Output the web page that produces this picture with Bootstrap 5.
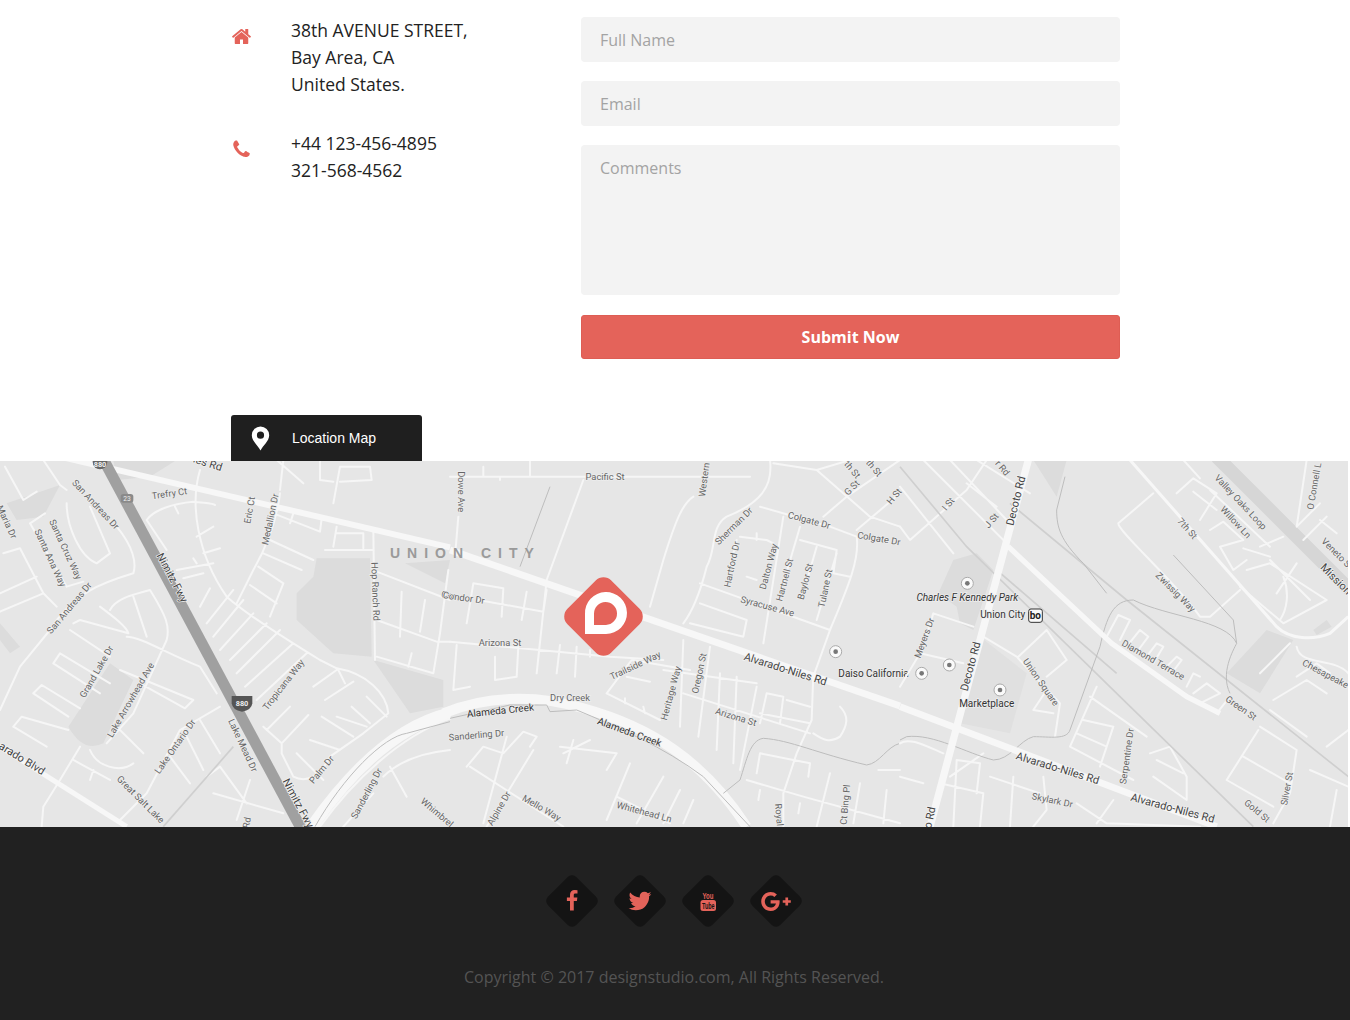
<!DOCTYPE html>
<html lang="en">
  <head>
    <meta charset="UTF-8" />
    <meta name="viewport" content="width=device-width, initial-scale=1.0" />
    <title>Contact</title>
    <link href="https://cdn.jsdelivr.net/npm/bootstrap@5.3.3/dist/css/bootstrap.min.css" rel="stylesheet" />
    <style>
      body { font-family: "Open Sans", sans-serif; color: #222; background: #fff; }
      .contact-wrap { width: 889px; margin-left: 231px; padding-top: 17px; }
      .info-col { width: 350px; flex: none; }
      .info-row { font-size: 17.5px; line-height: 27px; margin-top: 0; }
      .info-icon { width: 60px; flex: none; padding-top: 4px; }
      .info-phone { margin-top: 32px; }
      .info-text { margin-top: 0; margin-bottom: 0; }
      .contact-field.form-control { height: 45px; background: #f3f3f3; border: 0; border-radius: 4px; padding: 0 19px; font-size: 16px; margin-bottom: 19px; color: #333; box-shadow: none; }
      .contact-field::placeholder { color: #a3a3a3; opacity: 1; }
      textarea.contact-field.form-control { height: 150px; padding-top: 12px; resize: none; line-height: 22px; }
      .submit-btn.btn { width: 100%; height: 44px; margin-top: 1px; background: #e4635a; border: 1px solid #de5d54; border-radius: 3px; color: #fff; font-weight: 700; font-size: 16px; padding: 0; }
      .map-tab { width: 191px; height: 46px; margin: 56px 0 0 231px; background: #1f1f1f; color: #fff; border-radius: 3px 3px 0 0; font-family: "Liberation Sans", sans-serif; font-size: 14px; padding-left: 20px; }
      .map-tab-label { margin-left: 22px; }
      .map-box { width: 1348px; height: 366px; background: #e6e6e6; overflow: hidden; }
      .map-box svg { display: block; }
      .map-pin { position: absolute; left: 561px; top: 113px; }
      .st { fill: none; stroke: #f6f6f6; stroke-width: 6; stroke-linejoin: round; stroke-linecap: round; }
      .big { fill: none; stroke: #f7f7f7; stroke-linejoin: round; }
      .thin { fill: none; stroke: #bdbdbd; stroke-width: 3; stroke-linejoin: round; }
      .rail { fill: none; stroke: #cfcfcf; stroke-width: 5; }
      .park { fill: #dcdcdc; }
      .lbl { font-family: Roboto, sans-serif; font-size: 28px; fill: #666; text-anchor: middle; paint-order: stroke; stroke: #eee; stroke-width: 4px; }
      .lbl-big { font-family: Roboto, sans-serif; font-size: 33px; fill: #444; text-anchor: middle; paint-order: stroke; stroke: #f4f4f4; stroke-width: 4px; }
      .lbl-poi { font-family: Roboto, sans-serif; font-size: 30px; fill: #333; text-anchor: middle; paint-order: stroke; stroke: #eee; stroke-width: 4px; }
      .lbl-city { font-family: "Liberation Sans", sans-serif; font-size: 42px; fill: #9a9a9a; letter-spacing: 21px; font-weight: 700; }
      .site-foot { height: 193px; background: #212121; padding-top: 46px; }
      .soc-list { width: 1348px; gap: 12px; }
      .soc-item { width: 56px; height: 56px; position: relative; }
      .soc-item::before { content: ""; position: absolute; left: 8px; top: 8px; width: 40px; height: 40px; background: #141414; border-radius: 6px; transform: rotate(45deg); }
      .soc-item svg { position: relative; }
      .foot-copy { width: 1348px; margin: 37px 0 0; font-size: 16px; line-height: 22px; color: #545454; text-align: center; }
    </style>
  </head>

  <body>
    <section class="contact-wrap d-flex">
      <div class="info-col">
        <div class="d-flex info-row">
          <div class="info-icon">
            <svg width="21" height="21" viewBox="0 0 1792 1792" fill="#e4635a"><path d="M1472 992v480q0 26-19 45t-45 19h-384v-384h-256v384h-384q-26 0-45-19t-19-45v-480q0-1 .5-3t.5-3l575-474 575 474q1 2 1 6zm223-69l-62 74q-8 9-21 11h-3q-13 0-21-7l-692-577-692 577q-12 8-24 7-13-2-21-11l-62-74q-8-10-7-23.5t11-21.5l719-599q32-26 76-26t76 26l244 204v-195q0-14 9-23t23-9h192q14 0 23 9t9 23v408l219 182q10 8 11 21.5t-7 23.5z"/></svg>
          </div>
          <p class="info-text">38th AVENUE STREET,<br />Bay Area, CA<br />United States.</p>
        </div>
        <div class="d-flex info-row info-phone">
          <div class="info-icon">
            <svg width="21" height="21" viewBox="0 0 1792 1792" fill="#e4635a"><path d="M1600 1240q0 27-10 70.5t-21 68.5q-21 50-122 106-94 51-186 51-27 0-53-3.5t-57.5-12.5-47-14.5-55.5-20.5-49-18q-98-35-175-83-127-79-264-216t-216-264q-48-77-83-175-3-9-18-49t-20.5-55.5-14.5-47-12.5-57.5-3.5-53q0-92 51-186 56-101 106-122 25-11 68.5-21t70.5-10q14 0 21 3 18 6 53 76 11 19 30 54t35 63.5 31 53.5q3 4 17.5 25t21.5 35.5 7 28.5q0 20-28.5 50t-62 55-62 53-28.5 46q0 9 5 22.5t8.5 20.5 14 24 11.5 19q76 137 174 235t235 174q2 1 19 11.5t24 14 20.5 8.5 22.5 5q18 0 46-28.5t53-62 55-62 50-28.5q14 0 28.5 7t35.5 21.5 25 17.5q25 15 53.5 31t63.5 35 54 30q70 35 76 53 3 7 3 21z"/></svg>
          </div>
          <p class="info-text">+44 123-456-4895<br />321-568-4562</p>
        </div>
      </div>
      <form class="flex-grow-1">
        <input class="form-control contact-field" type="text" placeholder="Full Name" />
        <input class="form-control contact-field" type="text" placeholder="Email" />
        <textarea class="form-control contact-field" placeholder="Comments"></textarea>
        <button class="btn submit-btn" type="button">Submit Now</button>
      </form>
    </section>

    <div class="map-tab d-flex align-items-center">
      <svg width="19" height="25" viewBox="0 0 19 25"><path fill="#fff" fill-rule="evenodd" d="M9.5 24.5C7 19.5.8 15 .8 9.2a8.7 8.7 0 0 1 17.4 0c0 5.800-6.200 10.300-8.700 15.300zM9.500 5.600a3.600 3.600 0 1 0 0 7.200 3.600 3.600 0 0 0 0-7.200z"/></svg>
      <span class="map-tab-label">Location Map</span>
    </div>

    <div class="map-box position-relative">
      <svg width="1348" height="366" viewBox="0 461 1348 366">
        <!-- west part, coords read off the 3x crop -->
        <g transform="translate(0,460) scale(.33333)">
          <path class="park" d="M20 130L180 75 130 170 50 180zM330 610L400 660 310 850Q250 880 205 800zM950 295L1110 295 1115 590 1000 580 890 480 890 400 940 350zM1120 600L1330 660 1330 740 1230 760zM1215 310L1350 300 1335 370zM0 490L60 560 30 580 0 540zM340 0L530 0 450 50 350 60z"/>
          <path class="big" stroke-width="36" stroke="#efefef" d="M935 1100C1040 950 1180 800 1350 760"/>
          <path class="st" d="M15 20L70 120 110 95M130 0L180 75 200 90M90 190L135 160M200 130C200 200 240 290 290 310L330 280 270 140M350 200C400 260 410 310 400 340 300 370 220 400 150 510L60 620 0 750M90 190L200 380 250 365M0 400L110 350M0 455L130 400M10 280L60 265 130 400 170 440M300 440C340 470 380 500 385 520M330 450C350 410 420 400 450 390 500 470 510 500 500 540L400 760 320 850M400 410L440 530M220 490L240 480 385 520M210 510L330 590M380 530C420 530 500 580 600 620L650 700M160 610L180 580 330 670M160 610L300 700M100 700L125 675 240 745M100 700L205 770M40 800L65 770 205 810M40 800L140 860M360 630L580 720 555 745 420 670M350 800L430 880M660 740L540 810 440 1000 360 1080M600 780L660 880M550 810L610 930M510 890L570 970M620 950L660 920 740 1030M750 960L710 1080M270 870C290 920 360 940 400 910M240 860L180 960 130 1040 125 1100M220 900L330 960M280 930L270 960M640 1000L850 1060"/>
          <path class="st" d="M600 30C570 130 590 280 680 410 760 480 880 550 960 600L1010 625C1100 640 1160 700 1165 760L1090 820 990 890C960 950 920 970 880 950L845 880 845 850 790 800M530 330L640 310M550 355L610 340M600 440L630 385M620 490L700 390M640 530L730 420M660 570L760 460M690 600L800 490M710 640L840 510M735 680L880 550M770 720L920 580M800 810L870 740M845 850L925 765M890 880L970 960M930 840L1020 870M965 770L1060 830M1010 770L1100 800M1055 740L1110 790M1100 710L1160 770M940 680L1010 630M975 720L1060 665M1015 630L1035 670M440 180C460 150 520 130 580 125 620 130 640 130 645 135M440 180L480 240 500 270M525 140L535 160M590 230L640 200M610 280L660 265M580 295L590 310M840 100C830 180 800 260 760 330L710 430M775 320L850 370 810 470M750 375L830 430M830 0L910 70M850 0L840 90M820 160L960 215 965 175M880 160L870 190M810 240L940 300M790 280L905 330M1000 130L1020 20 1110 20 1115 60 1020 65M960 0L960 60 1000 65M1010 200L1000 260M1010 220L1090 220 1090 265M975 270L1120 270M1120 210L1125 600M1130 335L1350 420M1130 480L1310 545 1350 545M1205 395L1200 530M1275 420L1260 515M1130 590L1300 640 1320 520 1345 330M1235 580L1225 620M1350 870C1250 880 1190 910 1150 950M1170 920L1220 1010M1120 1000L1030 1100M960 1100C1060 960 1200 830 1350 775"/>
          <path class="rail" stroke="#d2d2d2" stroke-width="15" d="M490 1100L700 860"/>
          <path class="thin" d="M945 1100C1030 950 1150 830 1220 820L1350 785"/>
          <path class="big" stroke-width="18" d="M180 -10L1350 262"/>
          <path class="big" stroke-width="15" d="M0 860L380 1100"/>
          <path fill="none" stroke="#a0a0a0" stroke-width="33" d="M309 -4L906 1110"/>
          <circle cx="300" cy="6" r="22" fill="#666"/><text x="300" y="20" font-family="Roboto" font-size="22" text-anchor="middle" font-weight="700" fill="#eee">880</text>
          <path fill="#555" d="M695 708H757V730Q755 750 726 755 697 750 695 730z"/><text x="726" y="739" font-family="Roboto" font-size="22" text-anchor="middle" font-weight="700" fill="#eee">880</text>
          <rect x="362" y="102" width="38" height="26" rx="8" fill="#8a8a8a"/><text x="381" y="122" font-family="Roboto" font-size="20" text-anchor="middle" fill="#eee">23</text>
          <text class="lbl-big" transform="translate(620,20) rotate(18)">les Rd</text>
          <text class="lbl" transform="translate(280,140) rotate(47)">San Andreas Dr</text>
          <text class="lbl" transform="translate(510,110) rotate(-8)">Trefry Ct</text>
          <text class="lbl" transform="translate(758,152) rotate(-80)">Eric Ct</text>
          <text class="lbl" transform="translate(820,180) rotate(-78)">Medallion Dr</text>
          <text class="lbl" transform="translate(1117,395) rotate(88)">Hop Ranch Rd</text>
          <text class="lbl" transform="translate(188,272) rotate(65)">Santa Cruz Way</text>
          <text class="lbl" transform="translate(142,298) rotate(65)">Santa Ana Way</text>
          <text class="lbl" transform="translate(215,450) rotate(-50)">San Andreas Dr</text>
          <text class="lbl" transform="translate(12,190) rotate(65)">Maria Dr</text>
          <text class="lbl-big" transform="translate(507,358) rotate(62)">Nimitz Fwy</text>
          <text class="lbl" transform="translate(298,640) rotate(-60)">Grand Lake Dr</text>
          <text class="lbl" transform="translate(400,725) rotate(-60)">Lake Arrowhead Ave</text>
          <text class="lbl" transform="translate(858,680) rotate(-52)">Tropicana Way</text>
          <text class="lbl" transform="translate(533,865) rotate(-55)">Lake Ontario Dr</text>
          <text class="lbl" transform="translate(720,860) rotate(65)">Lake Mead Dr</text>
          <text class="lbl" transform="translate(972,935) rotate(-50)">Palm Dr</text>
          <text class="lbl" transform="translate(1108,1005) rotate(-62)">Sanderling Dr</text>
          <text class="lbl" transform="translate(1305,1065) rotate(40)">Whimbrel</text>
          <text class="lbl-big" transform="translate(885,1035) rotate(62)">Nimitz Fwy</text>
          <text class="lbl-big" transform="translate(60,905) rotate(32)">arado Blvd</text>
          <text class="lbl" transform="translate(415,1025) rotate(45)">Great Salt Lake</text>
          <text class="lbl" transform="translate(750,1090) rotate(-80)">Rd</text>
          <text class="lbl" transform="translate(1345,415) rotate(8)">Cor</text>
        </g>
        <!-- middle -->
        <g transform="translate(450,460) scale(.33333)">
          <path class="st" d="M0 50L900 50M100 20L100 50M240 0L240 50M150 50L150 60M25 170L15 290M400 60L290 360 260 640M50 490L70 370 160 385 155 470M85 420L280 455 290 390M230 395L215 480M0 545L480 590 640 600M20 555L10 690 60 680M135 590L135 660 200 650 205 560M270 545L260 640M330 555L320 640M380 560L375 650M420 570L420 590M470 700L545 600 720 630M470 700L630 780M530 650L600 665M525 715L525 730M580 740L585 760M640 630L920 670M700 700L1080 820M700 540L690 800M780 560L745 830M810 640L800 870M860 650L850 910M920 680L870 930M950 700L1000 710 990 790M950 700L930 790M1010 720L1080 740M930 760L1080 790M1090 640L1085 780 1040 880 1000 1000M730 110C700 130 680 170 640 300L600 440M960 0C970 80 930 130 830 170 780 200 800 270 770 320 750 400 730 450 700 490M930 140L1140 200 1220 230C1230 300 1190 390 1140 510L1090 650M870 230L950 240 970 250M860 240L840 320M1050 200L1000 370M750 370L1140 510M750 430L890 480 880 530 720 490M890 350L920 360M920 220L920 240M1000 170L940 550M1050 240L1160 270 1150 340 1200 350M1100 260L1060 400M1160 280L1100 480M970 10L1100 30 1260 170 1350 200M1100 30L1200 0M1120 170L1190 110 1350 0M1220 210L1350 100M50 920L100 860 160 880 220 815 260 830 240 860M60 920L340 1100M170 830L100 1090M250 870L110 1100M330 860L500 880 470 930M340 880L420 840M540 910L470 1080M640 950L560 1090M690 990L640 1090M730 1020L700 1090M500 1010L660 1090M370 840L350 910M890 960L1060 1010 1350 1090M930 880L920 940M930 880L1080 910 1075 950M1140 940L1100 1100M1230 970L1210 1090M1310 990L1300 1090M1350 930L1285 930M1000 1000L1000 1100M930 990L925 1020M1050 1030L1045 1060M1170 740C1200 770 1190 800 1170 830 1140 850 1120 840 1090 820"/>
          <path class="big" stroke-width="30" stroke="#efefef" d="M-20 760C100 710 250 700 400 745 600 800 760 900 890 1100"/>
          <path class="thin" d="M0 775L180 735 290 735 300 755 380 750C500 800 640 860 760 950L900 1100M820 1000L870 960C890 900 900 840 940 835 1020 840 1100 880 1250 915 1290 910 1310 860 1350 850M300 80L210 320"/>
          <path class="big" stroke-width="20" d="M0 270L1350 738"/>
          <text class="lbl" transform="translate(25,95) rotate(90)">Dowe Ave</text>
          <text class="lbl" transform="translate(465,60)">Pacific St</text>
          <text class="lbl" transform="translate(772,60) rotate(-82)">Western</text>
          <text class="lbl" transform="translate(858,205) rotate(-45)">Sherman Dr</text>
          <text class="lbl" transform="translate(1075,190) rotate(15)">Colgate Dr</text>
          <text class="lbl" transform="translate(1285,245) rotate(10)">Colgate Dr</text>
          <text class="lbl" transform="translate(1212,90) rotate(-45)">G St</text>
          <text class="lbl" transform="translate(1200,35) rotate(50)">th St</text>
          <text class="lbl" transform="translate(1265,30) rotate(50)">th St</text>
          <text class="lbl" transform="translate(1340,115) rotate(-50)">H St</text>
          <text class="lbl" transform="translate(855,315) rotate(-78)">Hartford Dr</text>
          <text class="lbl" transform="translate(965,322) rotate(-75)">Dalton Way</text>
          <text class="lbl" transform="translate(1013,362) rotate(-75)">Hartnell St</text>
          <text class="lbl" transform="translate(1075,367) rotate(-75)">Baylor St</text>
          <text class="lbl" transform="translate(1135,387) rotate(-78)">Tulane St</text>
          <text class="lbl" transform="translate(950,448) rotate(15)">Syracuse Ave</text>
          <text class="lbl" transform="translate(150,558)">Arizona St</text>
          <text class="lbl" transform="translate(40,423) rotate(8)">Condor Dr</text>
          <text class="lbl" transform="translate(560,625) rotate(-25)">Trailside Way</text>
          <text class="lbl" transform="translate(672,702) rotate(-75)">Heritage Way</text>
          <text class="lbl" transform="translate(757,642) rotate(-78)">Oregon St</text>
          <text class="lbl-big" transform="translate(1003,638) rotate(17.500)">Alvarado-Niles Rd</text>
          <text class="lbl" transform="translate(360,724)">Dry Creek</text>
          <text class="lbl-poi" transform="translate(152,762) rotate(-6)">Alameda Creek</text>
          <text class="lbl-poi" transform="translate(535,826) rotate(20)">Alameda Creek</text>
          <text class="lbl" transform="translate(80,835) rotate(-5)">Sanderling Dr</text>
          <text class="lbl" transform="translate(855,780) rotate(17)">Arizona St</text>
          <text class="lbl" transform="translate(155,1050) rotate(-60)">Alpine Dr</text>
          <text class="lbl" transform="translate(270,1052) rotate(30)">Mello Way</text>
          <text class="lbl" transform="translate(580,1065) rotate(15)">Whitehead Ln</text>
          <text class="lbl" transform="translate(978,1065) rotate(85)">Royal</text>
          <text class="lbl" transform="translate(1195,1035) rotate(-85)">Ct Bing Pl</text>
          <circle cx="1157" cy="575" r="18" fill="#fafafa" stroke="#aaa" stroke-width="3"/><circle cx="1157" cy="575" r="7" fill="#777"/>
          <text class="lbl-poi" x="1165" y="651" style="text-anchor:start">Daiso California</text>
        </g>
        <!-- east -->
        <g transform="translate(900,460) scale(.33333)">
          <path class="park" d="M160 300L230 280 280 330 220 510 180 490 170 440 115 400zM400 0L500 0 470 110zM980 640L1100 510 1180 540 1080 700zM1240 510L1280 480 1295 500 1250 525z"/>
          <path fill="#e0e0e0" d="M240 530L380 640 330 820 180 790z"/>
          <path fill="none" stroke="#d6d6d6" stroke-width="40" d="M950 -10L1350 390"/>
          <path class="st" d="M0 80L160 280M70 0L330 260M150 0L320 180M0 200L30 240 200 90 260 0M200 70L290 140M230 0L390 100M60 590L100 460 220 500M0 680L60 580 190 610M250 530L350 590 480 730 465 830M355 590L440 510 500 600 440 650M400 750L440 690M400 750L460 760M760 100L655 190C650 210 830 370 900 470L930 470 1020 390M850 0L900 55M830 100L880 55 950 100 900 180M880 95L950 150M930 90L1110 260M930 210L970 185 1030 240 960 260 1000 330 1040 300M1030 265L1110 290M1040 330L1110 310 1280 420 1150 490 1020 380M1080 260L1150 230M1110 300L1230 420M1150 350C1170 400 1160 450 1140 480M1190 310L1130 400M1190 200L1260 130M1210 240L1280 170M1260 180L1310 220M1080 640L1170 550M620 530L655 465 690 480 660 540M680 560L720 510 745 530 715 570M740 590L770 550 790 560 760 610M800 620L830 590 845 600 815 640M860 680L880 640 900 650M880 700L920 670 960 700 900 730M950 760L990 710M1190 560C1200 620 1300 590 1345 640M1190 650L1250 610 1290 640M1120 720L1220 660 1280 700M1110 750L1220 830M1280 860L1345 810M1080 800L1190 870 1170 1000 1120 1090M980 960L1075 810M980 960L1120 1040M1030 890L1170 970M1230 930L1345 980M1290 1100L1310 990M0 850C30 830 80 860 130 880M150 950L250 880M160 1100L170 900 240 910 230 1000M0 950L70 970M120 970L250 1000 240 1100M270 950L420 1000M340 950L330 1100M430 950L440 1050 400 1100M530 1030L620 1090 900 1100M590 680L510 860 700 960M570 710L740 830M550 780L640 800 600 920M530 820L620 860M750 880L810 860 860 950 860 1020 760 950M770 900L850 940M640 1020L590 1090M1220 0L1190 200"/>
          <path class="rail" d="M0 20L200 260 660 710 1060 1100M290 330L650 640M330 130L680 420 1345 950"/>
          <path class="thin" d="M820 285L1000 480 1010 550M470 150C470 200 480 240 550 310L620 400M495 50L470 150M600 560C620 470 640 420 700 420 800 470 980 480 1010 550 1000 570 960 640 990 700M600 560L510 810C500 840 450 830 400 830 360 840 330 900 280 900 200 880 100 820 20 830L0 840"/>
          <path class="big" stroke-width="9" d="M690 0L1130 500C1170 540 1240 540 1290 520L1345 470"/>
          <path class="big" stroke-width="16" d="M325 260L635 550 860 710 960 760"/>
          <path class="big" stroke-width="20" d="M0 740L950 1100"/>
          <path class="big" stroke-width="22" d="M385 0L90 1100"/>
          <text class="lbl-big" transform="translate(358,125) rotate(-76)">Decoto Rd</text>
          <text class="lbl-big" transform="translate(222,622) rotate(-75)">Decoto Rd</text>
          <text class="lbl" transform="translate(152,138) rotate(-50)">I St</text>
          <text class="lbl" transform="translate(282,188) rotate(-50)">J St</text>
          <text class="lbl" transform="translate(300,30) rotate(50)">r Rd</text>
          <text class="lbl-poi" transform="translate(202,423)" font-style="italic">Charles F Kennedy Park</text>
          <text class="lbl-poi" transform="translate(308,475)">Union City</text>
          <text class="lbl" transform="translate(82,537) rotate(-70)">Meyers Dr</text>
          <text class="lbl-poi" transform="translate(260,741)">Marketplace</text>
          <text class="lbl" transform="translate(415,672) rotate(55)">Union Square</text>
          <text class="lbl-big" transform="translate(470,935) rotate(17)">Alvarado-Niles Rd</text>
          <text class="lbl-big" transform="translate(815,1055) rotate(15)">Alvarado-Niles Rd</text>
          <text class="lbl" transform="translate(455,1030) rotate(12)">Skylark Dr</text>
          <text class="lbl" transform="translate(690,890) rotate(-82)">Serpentine Dr</text>
          <text class="lbl" transform="translate(755,608) rotate(30)">Diamond Terrace</text>
          <text class="lbl" transform="translate(1018,752) rotate(35)">Green St</text>
          <text class="lbl" transform="translate(1065,1060) rotate(40)">Gold St</text>
          <text class="lbl" transform="translate(1170,988) rotate(-80)">Silver St</text>
          <text class="lbl" transform="translate(1272,650) rotate(28)">Chesapeake</text>
          <text class="lbl" transform="translate(820,403) rotate(45)">Zwissig Way</text>
          <text class="lbl" transform="translate(855,212) rotate(48)">7th St</text>
          <text class="lbl" transform="translate(1015,133) rotate(47)">Valley Oaks Loop</text>
          <text class="lbl" transform="translate(1000,193) rotate(47)">Willow Ln</text>
          <text class="lbl" transform="translate(1252,80) rotate(-80)">O Connell L</text>
          <text class="lbl" transform="translate(1305,288) rotate(45)">Veneto St</text>
          <text class="lbl-big" transform="translate(1300,365) rotate(45)">Mission</text>
          <text class="lbl-big" transform="translate(100,1075) rotate(-78)">o Rd</text>
          <circle cx="202" cy="370" r="18" fill="#fafafa" stroke="#aaa" stroke-width="3"/><circle cx="202" cy="370" r="7" fill="#777"/>
          <circle cx="148" cy="615" r="18" fill="#fafafa" stroke="#aaa" stroke-width="3"/><circle cx="148" cy="615" r="7" fill="#777"/>
          <circle cx="65" cy="640" r="18" fill="#fafafa" stroke="#aaa" stroke-width="3"/><circle cx="65" cy="640" r="7" fill="#777"/>
          <circle cx="300" cy="690" r="18" fill="#fafafa" stroke="#aaa" stroke-width="3"/><circle cx="300" cy="690" r="7" fill="#777"/>
          <rect x="386" y="447" width="41" height="40" rx="7" fill="#fafafa" stroke="#333" stroke-width="3"/>
          <text x="406" y="478" font-family="Roboto" font-size="30" font-weight="700" text-anchor="middle" fill="#222">bo</text>
        </g>
        <text class="lbl-city" transform="translate(390,558) scale(.33333)">UNION CITY</text>
      </svg>
      <svg class="map-pin" width="85" height="85" viewBox="0 0 85 85">
        <rect x="11.500" y="11.500" width="62" height="62" rx="11" fill="#e4635a" transform="rotate(45 42.500 42.500)"/>
        <path fill="#fff" fill-rule="evenodd" d="M24 60V40a21 21 0 1 1 21 20zM33 51H45a11.500 11.500 0 1 0-12-11.500z"/>
      </svg>
    </div>

    <footer class="site-foot">
      <div class="soc-list d-flex justify-content-center">
        <a class="soc-item d-flex align-items-center justify-content-center" href="#">
          <svg width="22" height="22" viewBox="0 0 1792 1792" fill="#e4635a"><path d="M1343 12v264h-157q-86 0-116 36t-30 108v189h293l-39 296h-254v759h-306v-759h-255v-296h255v-218q0-186 104-288.5t277-102.5q147 0 228 12z"/></svg>
        </a>
        <a class="soc-item d-flex align-items-center justify-content-center" href="#">
          <svg width="26" height="26" viewBox="0 0 1792 1792" fill="#e4635a"><path d="M1684 408q-67 98-162 167 1 14 1 42 0 130-38 259.5t-115.5 248.5-184.5 210.5-258 146-323 54.5q-271 0-496-145 35 4 78 4 225 0 401-138-105-2-188-64.5t-114-159.5q33 5 61 5 43 0 85-11-112-23-185.5-111.5t-73.500-205.500v-4q68 38 146 41-66-44-105-115t-39-154q0-88 44-163 121 149 294.500 238.500t371.500 99.500q-8-38-8-74 0-134 94.500-228.500t228.500-94.500q140 0 236 102 109-21 205-78-37 115-142 181 97-11 192-52z"/></svg>
        </a>
        <a class="soc-item d-flex align-items-center justify-content-center" href="#">
          <svg width="18" height="22" viewBox="0 0 18 22">
            <text x="9" y="8.500" font-family="'Liberation Sans Narrow','Liberation Sans',sans-serif" font-size="9" font-weight="700" text-anchor="middle" textLength="11" lengthAdjust="spacingAndGlyphs" fill="#e4635a">You</text>
            <rect x="1.500" y="10" width="15.500" height="11" rx="2.500" fill="#e4635a"/>
            <text x="9.300" y="18.500" font-family="'Liberation Sans',sans-serif" font-size="8.500" font-weight="700" text-anchor="middle" textLength="12.500" lengthAdjust="spacingAndGlyphs" fill="#141414">Tube</text>
          </svg>
        </a>
        <a class="soc-item d-flex align-items-center justify-content-center" href="#">
          <svg width="30" height="23" viewBox="0 0 2304 1792" fill="#e4635a"><path d="M1437 913q0 208-87 370.5t-248 254-369 91.5q-149 0-285-58t-234-156-156-234-58-285 58-285 156-234 234-156 285-58q286 0 491 192l-199 191q-117-113-292-113-123 0-227.5 62t-165.5 168.5-61 232.5 61 232.5 165.5 168.5 227.5 62q83 0 152.5-23t114.5-57.5 78.5-78.5 49-83 21.5-74h-416v-252h692q12 63 12 122zm867-122v210h-209v209h-210v-209h-209v-210h209v-209h210v209h209z"/></svg>
        </a>
      </div>
      <p class="foot-copy">Copyright © 2017 designstudio.com, All Rights Reserved.</p>
    </footer>

    <script src="https://cdn.jsdelivr.net/npm/bootstrap@5.3.3/dist/js/bootstrap.bundle.min.js"></script>
  </body>
</html>
